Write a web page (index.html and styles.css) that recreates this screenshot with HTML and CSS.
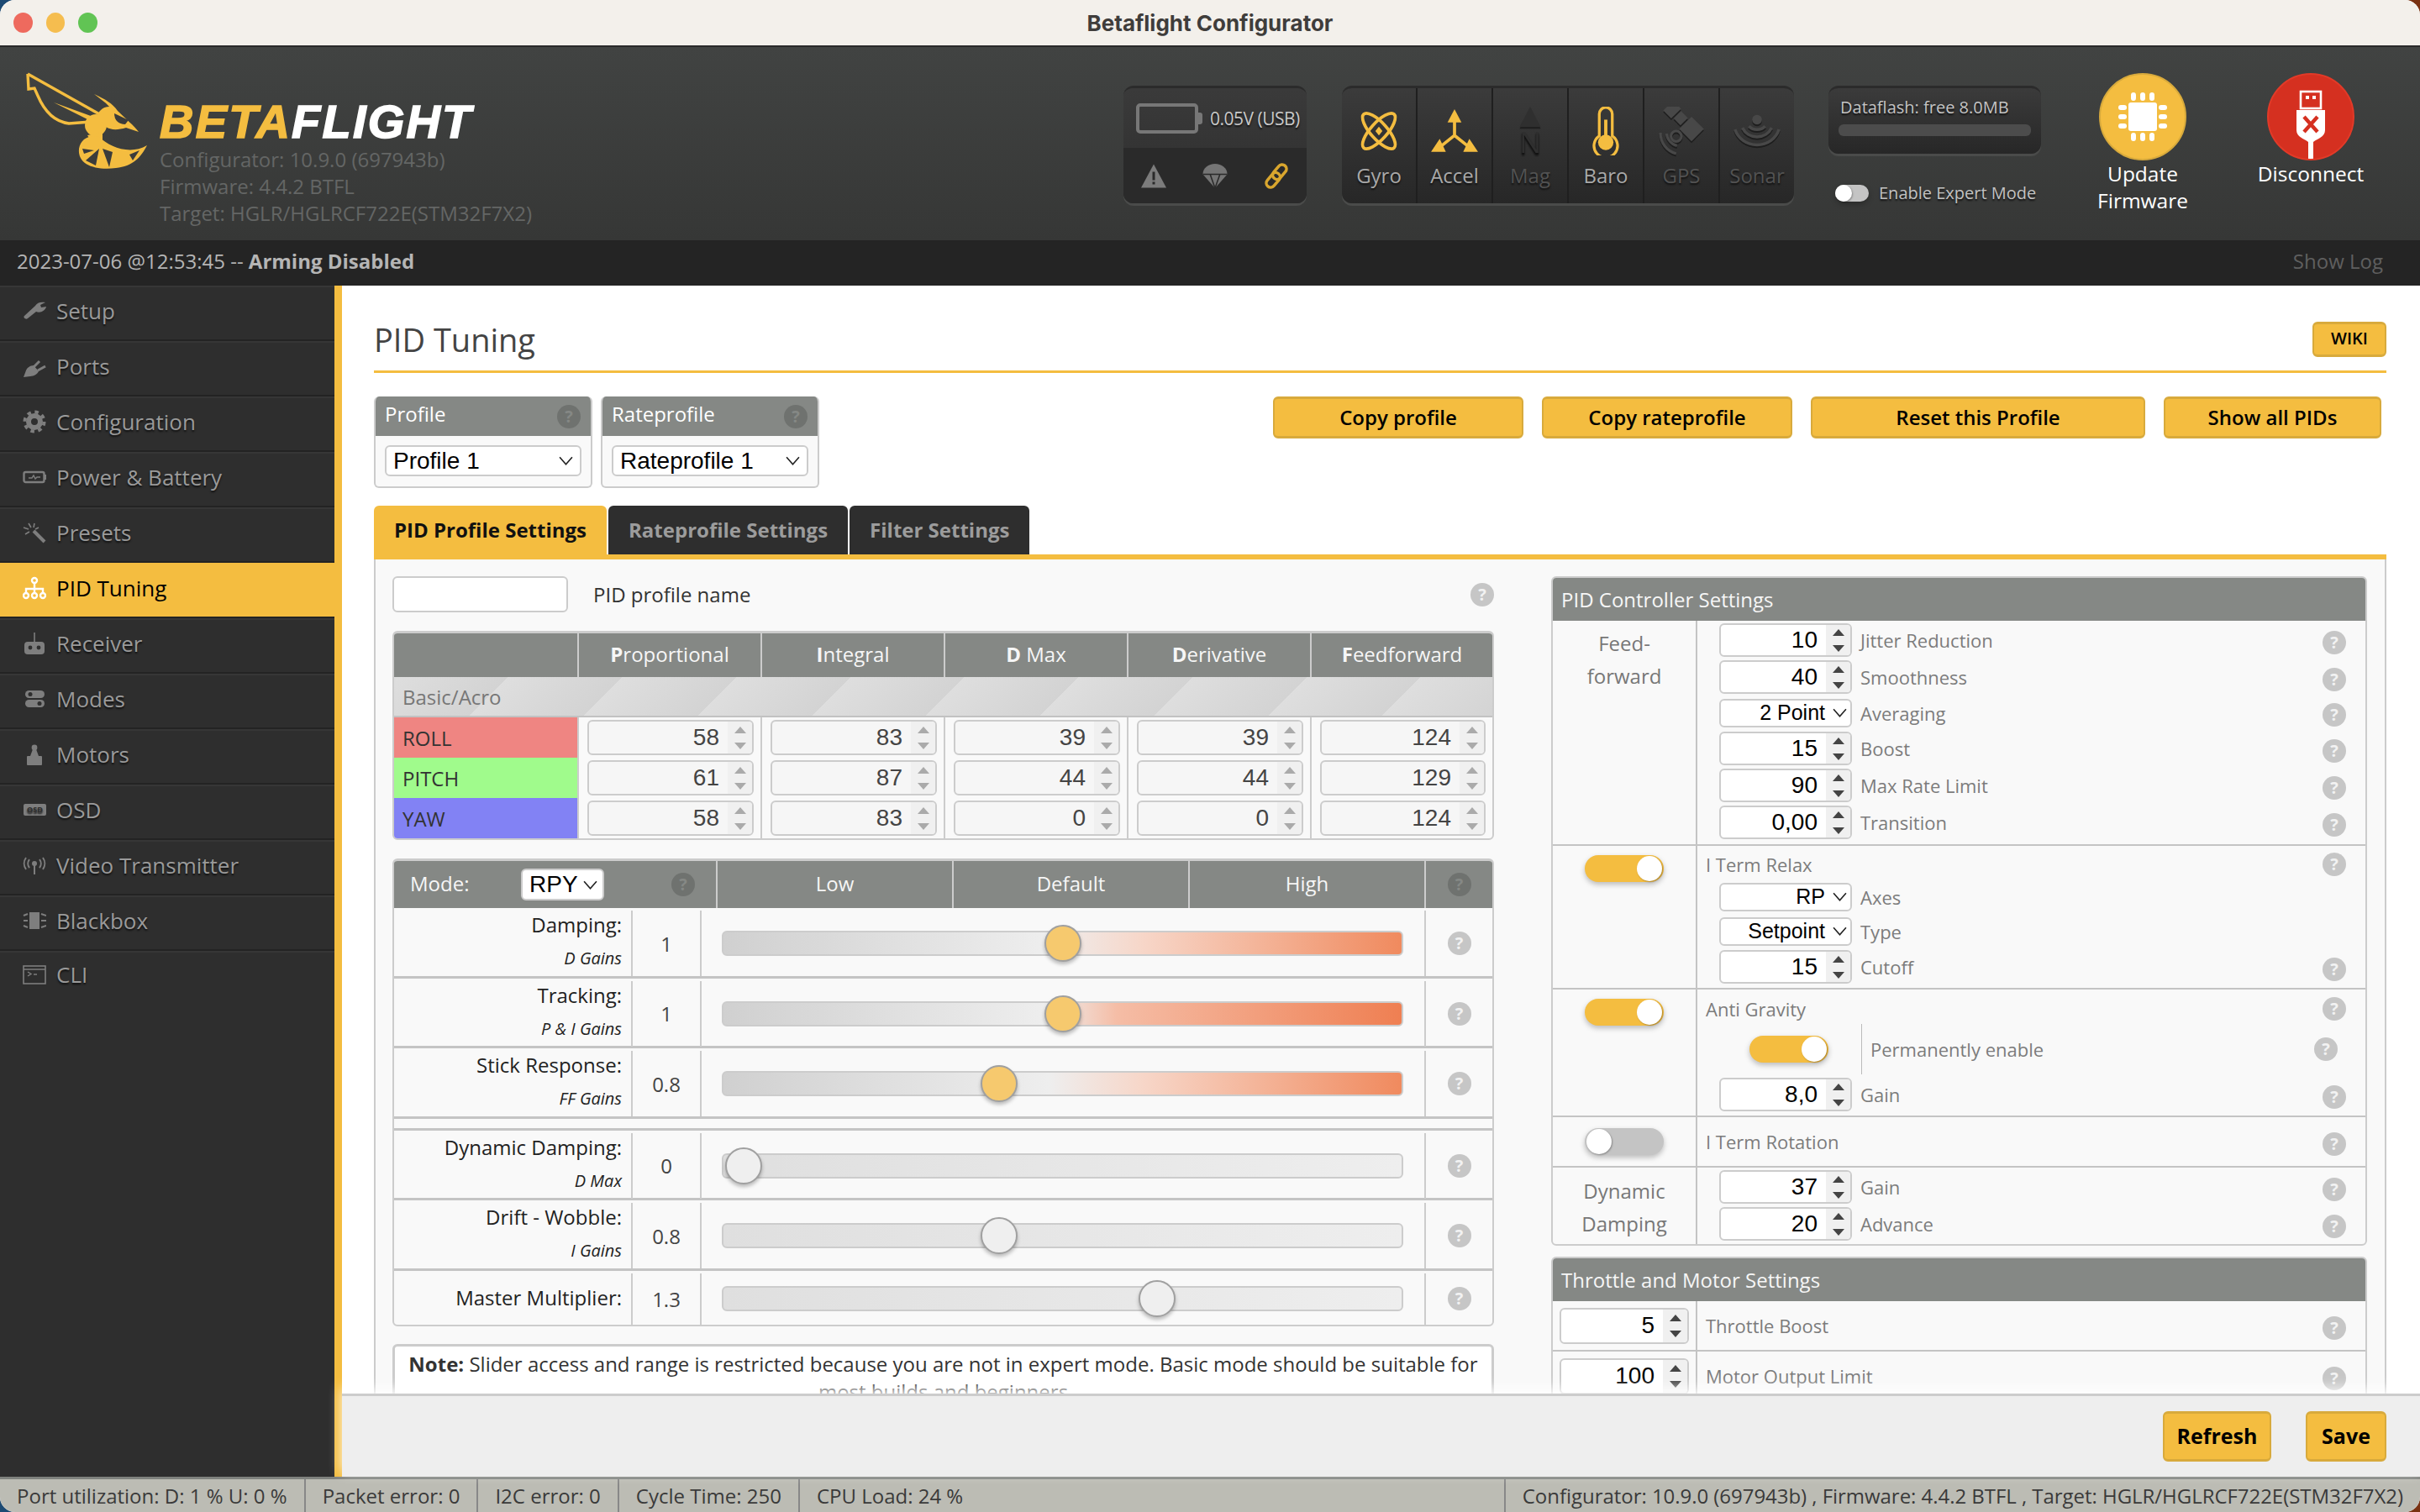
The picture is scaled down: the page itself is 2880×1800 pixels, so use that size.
FILE: index.html
```html
<!DOCTYPE html>
<html lang="en">

<head>
    <meta charset="UTF-8">
    <title>Betaflight Configurator</title>
    <link rel="stylesheet" href="styles.css">
</head>

<body>
    <div class="window">
        <div class="titlebar">
            <div class="lights"><span class="light red"></span><span class="light yellow"></span><span class="light green"></span></div>
            <div class="titlebar-text">Betaflight Configurator</div>
        </div>

        <header class="header">
            <svg class="wasp" viewBox="0 0 148 118">
                <g fill="none" stroke="#f4bd40" stroke-width="3.4">
                    <path d="M3 3 L92 53" />
                    <path d="M3 3 L4 21 L11 20 L15 29 C24 50 36 60 52 62 L78 60" />
                </g>
                <g fill="#f4bd40">
                    <path d="M34 37 L78 53 L78 59 Z" />
                    <ellipse cx="84" cy="64" rx="13" ry="13" />
                    <path d="M82 27 C95 33 104 38 110 47 C118 55 130 65 135 72 L120 67 C110 70 102 70 96 66 L86 55 C86 48 92 42 100 42 C95 36 88 32 82 27 Z" />
                    <path d="M74 76 L92 72 L92 82 L80 86 Z" />
                    <path d="M64 92 C66 80 76 75 88 78 C100 90 125 100 145 88 C138 102 128 113 108 115 C85 118 62 112 64 92 Z" />
                </g>
                <g fill="#3b3c3b">
                    <path d="M106 50 L123 58 L119 63 C111 63 106 58 106 50 Z" />
                    <path d="M68 92 L82 94 L70 98 Z" />
                    <path d="M72 106 L88 92 L84 112 Z" />
                    <path d="M92 92 L100 114 L104 96 Z" />
                    <path d="M124 99 L136 94 L128 106 Z" />
                </g>
            </svg>
            <div class="brand">
                <div class="wordmark"><span class="beta">BETA</span>FLIGHT</div>
                <div class="version">Configurator: 10.9.0 (697943b)</div>
                <div class="version">Firmware: 4.4.2 BTFL</div>
                <div class="version">Target: HGLR/HGLRCF722E(STM32F7X2)</div>
            </div>

            <div class="battery-box">
                <div class="battery-top">
                    <span class="battery"></span>
                    <span class="battery-text">0.05V (USB)</span>
                </div>
                <div class="battery-bottom">
                    <svg class="status-icon" viewBox="0 0 32 30">
                        <path fill="#7c7c7c" d="M16 1 L31 29 L1 29 Z" />
                        <rect x="14.5" y="10" width="3" height="10" fill="#2a2a2a" />
                        <rect x="14.5" y="22" width="3" height="3" fill="#2a2a2a" />
                    </svg>
                    <svg class="status-icon" viewBox="0 0 32 32">
                        <path fill="#757575" d="M16 1 C8 1 1 6 1 14 L16 31 L31 14 C31 6 24 1 16 1 Z" />
                        <path fill="none" stroke="#2a2a2a" stroke-width="1.6" d="M1 14 L31 14 M10 14 L16 31 L22 14" />
                    </svg>
                    <svg class="status-icon" viewBox="0 0 30 30">
                        <g fill="none" stroke="#d9a62e" stroke-width="3.4">
                            <rect x="14" y="1" width="10" height="19" rx="5" transform="rotate(40 19 10)" />
                            <rect x="6" y="10" width="10" height="19" rx="5" transform="rotate(40 11 20)" />
                        </g>
                    </svg>
                </div>
            </div>

            <div class="sensors">
                <div class="sensor on">
                    <svg class="sensor-icon" viewBox="0 0 56 56">
                        <g fill="none" stroke="#f4bd40" stroke-width="3.6">
                            <ellipse cx="28" cy="28" rx="9.5" ry="26" transform="rotate(-42 28 28)" />
                            <ellipse cx="28" cy="28" rx="9.5" ry="26" transform="rotate(42 28 28)" />
                        </g>
                        <path fill="#f4bd40" d="M28 23 L32 28 L28 33 L24 28 Z" />
                    </svg>
                    <span>Gyro</span>
                </div>
                <div class="sensor on">
                    <svg class="sensor-icon" viewBox="0 0 56 56">
                        <g fill="#f4bd40">
                            <path d="M28 3 L36 18 L20 18 Z" />
                            <path d="M1 52 L18 52 L11 37 Z" />
                            <path d="M55 52 L38 52 L45 37 Z" />
                        </g>
                        <path fill="none" stroke="#f4bd40" stroke-width="3.6" d="M28 16 L28 33 L13 45 M28 33 L43 45" />
                    </svg>
                    <span>Accel</span>
                </div>
                <div class="sensor off">
                    <svg class="sensor-icon" viewBox="0 0 56 60">
                        <path fill="#2f2f2f" d="M28 0 L41 25 L15 25 Z" />
                        <text class="mag-n" x="28" y="57">N</text>
                    </svg>
                    <span>Mag</span>
                </div>
                <div class="sensor on">
                    <svg class="sensor-icon" viewBox="0 0 56 60">
                        <path fill="none" stroke="#f4bd40" stroke-width="3.4" d="M20 36 L20 9 A8 8 0 0 1 36 9 L36 36 A14.5 14.5 0 1 1 20 36 Z" />
                        <circle cx="28" cy="44" r="9.5" fill="#f4bd40" />
                        <rect x="26" y="16" width="4" height="24" fill="#f4bd40" />
                    </svg>
                    <span>Baro</span>
                </div>
                <div class="sensor off">
                    <svg class="sensor-icon" viewBox="0 0 56 56">
                        <g fill="#484848" transform="rotate(-45 34 20)">
                            <rect x="26" y="-10" width="16" height="13" />
                            <rect x="28" y="5" width="12" height="11" />
                            <rect x="24" y="18" width="20" height="20" />
                        </g>
                        <g fill="none" stroke="#484848" stroke-width="3">
                            <path d="M4 30 A24 24 0 0 0 22 54" />
                            <path d="M11 31 A16 16 0 0 0 23 45" />
                            <circle cx="22" cy="34" r="6" />
                        </g>
                    </svg>
                    <span>GPS</span>
                </div>
                <div class="sensor off">
                    <svg class="sensor-icon" viewBox="0 0 60 56">
                        <circle cx="30" cy="14" r="6" fill="#484848" />
                        <g fill="none" stroke="#484848" stroke-width="3.6">
                            <path d="M20 22 A14 14 0 0 0 40 22" />
                            <path d="M12 24 A20 20 0 0 0 48 24" />
                            <path d="M3 26 A28 26 0 0 0 57 26" />
                        </g>
                    </svg>
                    <span>Sonar</span>
                </div>
            </div>

            <div class="flash-col">
                <div class="flash-box">
                    <div class="flash-text">Dataflash: free 8.0MB</div>
                    <div class="flash-bar"></div>
                </div>
                <div class="expert">
                    <span class="switch small"><span class="knob"></span></span>
                    <span>Enable Expert Mode</span>
                </div>
            </div>

            <div class="big-btn update">
                <span class="circle circle-yellow">
                    <svg viewBox="0 0 60 60" width="60" height="60">
                        <rect x="13" y="13" width="34" height="34" rx="3" fill="#fff" />
                        <g fill="#fff">
                            <rect x="16" y="1" width="6" height="10" rx="3" />
                            <rect x="27" y="1" width="6" height="10" rx="3" />
                            <rect x="38" y="1" width="6" height="10" rx="3" />
                            <rect x="16" y="49" width="6" height="10" rx="3" />
                            <rect x="27" y="49" width="6" height="10" rx="3" />
                            <rect x="38" y="49" width="6" height="10" rx="3" />
                            <rect x="1" y="16" width="10" height="6" rx="3" />
                            <rect x="1" y="27" width="10" height="6" rx="3" />
                            <rect x="1" y="38" width="10" height="6" rx="3" />
                            <rect x="49" y="16" width="10" height="6" rx="3" />
                            <rect x="49" y="27" width="10" height="6" rx="3" />
                            <rect x="49" y="38" width="10" height="6" rx="3" />
                        </g>
                    </svg>
                </span>
                <span class="big-btn-text">Update<br>Firmware</span>
            </div>
            <div class="big-btn">
                <span class="circle circle-red">
                    <svg viewBox="0 0 40 104" width="40" height="104">
                        <rect x="8" y="22" width="24" height="20" fill="none" stroke="#fff" stroke-width="2.6" />
                        <rect x="14" y="27" width="4" height="4" fill="#fff" />
                        <rect x="22" y="27" width="4" height="4" fill="#fff" />
                        <path fill="#fff" d="M3 44 L37 44 L37 68 C37 76 28 78 23 82 L23 104 L17 104 L17 82 C12 78 3 76 3 68 Z" />
                        <path stroke="#d53020" stroke-width="4.4" d="M12 52 L28 70 M28 52 L12 70" />
                    </svg>
                </span>
                <span class="big-btn-text">Disconnect</span>
            </div>
        </header>

        <div class="logbar">
            <div class="log-text">2023-07-06 @12:53:45 -- <b>Arming Disabled</b></div>
            <div class="show-log">Show Log</div>
        </div>

        <div class="main">
            <nav class="sidebar">
                <a class="nav-item">
                    <svg viewBox="0 0 28 28"><path d="M15 8c2-4 7-5 12-4l-6 3 1 3 6-1c-1 5-7 8-12 6L6 23c-2 2-6-1-4-3z" /></svg>
                    Setup
                </a>
                <a class="nav-item">
                    <svg viewBox="0 0 28 28"><path d="M1 27l3-8c1-3 5-6 9-6l6 7c-1 3-6 6-10 6z" /><path stroke="currentColor" stroke-width="3" d="M13 15l7-7M18 19l9-5" /></svg>
                    Ports
                </a>
                <a class="nav-item">
                    <svg viewBox="0 0 28 28"><circle cx="14" cy="14" r="7" fill="none" stroke="currentColor" stroke-width="6" /><circle cx="14" cy="14" r="11.5" fill="none" stroke="currentColor" stroke-width="4" stroke-dasharray="4.5 4.53" /></svg>
                    Configuration
                </a>
                <a class="nav-item">
                    <svg viewBox="0 0 28 28"><rect x="1.5" y="8" width="24" height="12" rx="2" fill="none" stroke="currentColor" stroke-width="2.4" /><rect x="26" y="11" width="2" height="6" /><path fill="none" stroke="currentColor" stroke-width="1.4" d="M7 15 L11 15 L13 12 L15 16 L17 14 L21 14" /></svg>
                    Power &amp; Battery
                </a>
                <a class="nav-item">
                    <svg viewBox="0 0 28 28"><path stroke="currentColor" stroke-width="4" d="M13 12 L26 25" /><path stroke="currentColor" stroke-width="1.6" d="M1 8 L7 10 M3 16 L8 13 M7 3 L10 8 M14 3 L13 8 M19 8 L15 10" /></svg>
                    Presets
                </a>
                <a class="nav-item active">
                    <svg viewBox="0 0 28 28"><g fill="none" stroke="currentColor" stroke-width="2.4"><circle cx="14" cy="5" r="3" /><circle cx="4" cy="23" r="3" /><circle cx="14" cy="23" r="3" /><circle cx="24" cy="23" r="3" /><path d="M14 8 L14 20 M4 20 L4 15 L24 15 L24 20" /></g></svg>
                    PID Tuning
                </a>
                <a class="nav-item">
                    <svg viewBox="0 0 28 28"><rect x="2" y="12" width="24" height="15" rx="4" /><path stroke="currentColor" stroke-width="1.6" d="M14 1 L14 12" /><circle cx="9" cy="19" r="2.4" class="nav-hole" /><circle cx="19" cy="19" r="2.4" class="nav-hole" /></svg>
                    Receiver
                </a>
                <a class="nav-item">
                    <svg viewBox="0 0 28 28"><rect x="3" y="4" width="23" height="9" rx="4.5" /><rect x="3" y="15" width="23" height="9" rx="4.5" /><circle cx="9" cy="8.5" r="2.5" class="nav-hole" /><circle cx="20" cy="19.5" r="2.5" class="nav-hole" /></svg>
                    Modes
                </a>
                <a class="nav-item">
                    <svg viewBox="0 0 28 28"><rect x="5" y="16" width="18" height="11" rx="1" /><path d="M9 16 L12 8 L16 8 L19 16 Z" /><circle cx="14" cy="6" r="3.4" /></svg>
                    Motors
                </a>
                <a class="nav-item">
                    <svg viewBox="0 0 28 28"><rect x="1" y="7" width="27" height="14" rx="2" /><text x="14.5" y="17.4" class="osd-text">OSD</text></svg>
                    OSD
                </a>
                <a class="nav-item">
                    <svg viewBox="0 0 28 28"><circle cx="14" cy="12" r="3" /><path stroke="currentColor" stroke-width="2" d="M14 13 L14 25" /><g fill="none" stroke="currentColor" stroke-width="2"><path d="M8 7 A8 8 0 0 0 8 17 M20 7 A8 8 0 0 1 20 17" /><path d="M4 5 A12 12 0 0 0 4 19 M24 5 A12 12 0 0 1 24 19" /></g></svg>
                    Video Transmitter
                </a>
                <a class="nav-item">
                    <svg viewBox="0 0 28 28"><rect x="8" y="4" width="12" height="20" /><path stroke="currentColor" stroke-width="2" d="M1 8 L6 6 M1 14 L6 14 M1 20 L6 22 M22 6 L28 8 M22 14 L28 14 M22 22 L28 20" /></svg>
                    Blackbox
                </a>
                <a class="nav-item">
                    <svg viewBox="0 0 28 28"><rect x="1" y="4" width="26" height="21" fill="none" stroke="currentColor" stroke-width="1.6" /><path stroke="currentColor" stroke-width="1.4" fill="none" d="M1 8 L27 8 M6 11 L10 13.5 L6 16 M13 14 L17 14" /></svg>
                    CLI
                </a>
            </nav>

            <div class="content">
                <div class="scroll">
                    <div class="tab-title">
                        <h1>PID Tuning</h1>
                        <a class="btn btn-wiki">WIKI</a>
                    </div>

                    <div class="top-row">
                        <div class="picker">
                            <div class="picker-head"><span>Profile</span> <span class="help dark">?</span></div>
                            <div class="picker-body">
                                <div class="select">Profile 1
                                    <svg class="chev" viewBox="0 0 16 10"><path d="M1 1 L8 9 L15 1" /></svg>
                                </div>
                            </div>
                        </div>
                        <div class="picker">
                            <div class="picker-head"><span>Rateprofile</span> <span class="help dark">?</span></div>
                            <div class="picker-body">
                                <div class="select">Rateprofile 1
                                    <svg class="chev" viewBox="0 0 16 10"><path d="M1 1 L8 9 L15 1" /></svg>
                                </div>
                            </div>
                        </div>
                        <div class="actions">
                            <a class="btn btn-copy">Copy profile</a>
                            <a class="btn btn-copy">Copy rateprofile</a>
                            <a class="btn btn-reset">Reset this Profile</a>
                            <a class="btn btn-show">Show all PIDs</a>
                        </div>
                    </div>

                    <div class="tabs">
                        <a class="tab active">PID Profile Settings</a>
                        <a class="tab">Rateprofile Settings</a>
                        <a class="tab">Filter Settings</a>
                    </div>

                    <div class="panel">
                        <div class="col-left">
                            <div class="name-row">
                                <input class="name-input" type="text">
                                <span class="name-label">PID profile name</span>
                                <span class="help">?</span>
                            </div>

                            <div class="pid-table">
                                <div class="pid-head"></div>
                                <div class="pid-head line"><span><b>P</b>roportional</span></div>
                                <div class="pid-head line"><span><b>I</b>ntegral</span></div>
                                <div class="pid-head line"><span><b>D</b> Max</span></div>
                                <div class="pid-head line"><span><b>D</b>erivative</span></div>
                                <div class="pid-head line"><span><b>F</b>eedforward</span></div>

                                <div class="pid-sub">Basic/Acro</div>

                                <div class="axis roll">ROLL</div>
                                <div class="pid-cell"><div class="num muted"><input value="58"><span class="spin"><i class="up"></i><i class="down"></i></span></div></div>
                                <div class="pid-cell"><div class="num muted"><input value="83"><span class="spin"><i class="up"></i><i class="down"></i></span></div></div>
                                <div class="pid-cell"><div class="num muted"><input value="39"><span class="spin"><i class="up"></i><i class="down"></i></span></div></div>
                                <div class="pid-cell"><div class="num muted"><input value="39"><span class="spin"><i class="up"></i><i class="down"></i></span></div></div>
                                <div class="pid-cell"><div class="num muted"><input value="124"><span class="spin"><i class="up"></i><i class="down"></i></span></div></div>

                                <div class="axis pitch">PITCH</div>
                                <div class="pid-cell"><div class="num muted"><input value="61"><span class="spin"><i class="up"></i><i class="down"></i></span></div></div>
                                <div class="pid-cell"><div class="num muted"><input value="87"><span class="spin"><i class="up"></i><i class="down"></i></span></div></div>
                                <div class="pid-cell"><div class="num muted"><input value="44"><span class="spin"><i class="up"></i><i class="down"></i></span></div></div>
                                <div class="pid-cell"><div class="num muted"><input value="44"><span class="spin"><i class="up"></i><i class="down"></i></span></div></div>
                                <div class="pid-cell"><div class="num muted"><input value="129"><span class="spin"><i class="up"></i><i class="down"></i></span></div></div>

                                <div class="axis yaw">YAW</div>
                                <div class="pid-cell"><div class="num muted"><input value="58"><span class="spin"><i class="up"></i><i class="down"></i></span></div></div>
                                <div class="pid-cell"><div class="num muted"><input value="83"><span class="spin"><i class="up"></i><i class="down"></i></span></div></div>
                                <div class="pid-cell"><div class="num muted"><input value="0"><span class="spin"><i class="up"></i><i class="down"></i></span></div></div>
                                <div class="pid-cell"><div class="num muted"><input value="0"><span class="spin"><i class="up"></i><i class="down"></i></span></div></div>
                                <div class="pid-cell"><div class="num muted"><input value="124"><span class="spin"><i class="up"></i><i class="down"></i></span></div></div>
                            </div>

                            <div class="mode-table">
                                <div class="mode-head">
                                    <div class="mode-head-left">
                                        <span class="mode-label">Mode:</span>
                                        <div class="select select-rpy">RPY
                                            <svg class="chev" viewBox="0 0 16 10"><path d="M1 1 L8 9 L15 1" /></svg>
                                        </div>
                                        <span class="help dark">?</span>
                                    </div>
                                    <div class="mode-col"><span>Low</span></div>
                                    <div class="mode-col"><span>Default</span></div>
                                    <div class="mode-col"><span>High</span></div>
                                    <div class="mode-col"><span class="help dark">?</span></div>
                                </div>

                                <div class="mode-row">
                                    <div class="mode-name">Damping:<small>D Gains</small></div>
                                    <div class="mode-val">1</div>
                                    <div class="mode-slider"><div class="track live"><span class="thumb live" style="left: 50%"></span></div></div>
                                    <div class="mode-help"><span class="help">?</span></div>
                                </div>
                                <div class="mode-row">
                                    <div class="mode-name">Tracking:<small>P &amp; I Gains</small></div>
                                    <div class="mode-val">1</div>
                                    <div class="mode-slider"><div class="track live strong"><span class="thumb live" style="left: 50%"></span></div></div>
                                    <div class="mode-help"><span class="help">?</span></div>
                                </div>
                                <div class="mode-row">
                                    <div class="mode-name">Stick Response:<small>FF Gains</small></div>
                                    <div class="mode-val">0.8</div>
                                    <div class="mode-slider"><div class="track live"><span class="thumb live" style="left: 40.7%"></span></div></div>
                                    <div class="mode-help"><span class="help">?</span></div>
                                </div>
                                <div class="mode-gap"></div>
                                <div class="mode-row">
                                    <div class="mode-name">Dynamic Damping:<small>D Max</small></div>
                                    <div class="mode-val">0</div>
                                    <div class="mode-slider"><div class="track"><span class="thumb" style="left: 3%"></span></div></div>
                                    <div class="mode-help"><span class="help">?</span></div>
                                </div>
                                <div class="mode-row">
                                    <div class="mode-name">Drift - Wobble:<small>I Gains</small></div>
                                    <div class="mode-val">0.8</div>
                                    <div class="mode-slider"><div class="track"><span class="thumb" style="left: 40.7%"></span></div></div>
                                    <div class="mode-help"><span class="help">?</span></div>
                                </div>
                                <div class="mode-row last">
                                    <div class="mode-name">Master Multiplier:</div>
                                    <div class="mode-val">1.3</div>
                                    <div class="mode-slider"><div class="track"><span class="thumb" style="left: 64%"></span></div></div>
                                    <div class="mode-help"><span class="help">?</span></div>
                                </div>
                            </div>

                            <div class="note"><b>Note:</b> Slider access and range is restricted because you are not in expert mode. Basic mode should be suitable for most builds and beginners</div>
                        </div>

                        <div class="col-right">
                            <div class="box">
                                <div class="box-head">PID Controller Settings</div>

                                <div class="group">
                                    <div class="group-left"><span>Feed-</span><span>forward</span></div>
                                    <div class="group-right pad-ff">
                                        <div class="ctl"><div class="num"><input value="10"><span class="spin"><i class="up"></i><i class="down"></i></span></div><label>Jitter Reduction</label><span class="help">?</span></div>
                                        <div class="ctl"><div class="num"><input value="40"><span class="spin"><i class="up"></i><i class="down"></i></span></div><label>Smoothness</label><span class="help">?</span></div>
                                        <div class="ctl sel"><div class="select select-small">2 Point<svg class="chev" viewBox="0 0 16 10"><path d="M1 1 L8 9 L15 1" /></svg></div><label>Averaging</label><span class="help">?</span></div>
                                        <div class="ctl"><div class="num"><input value="15"><span class="spin"><i class="up"></i><i class="down"></i></span></div><label>Boost</label><span class="help">?</span></div>
                                        <div class="ctl"><div class="num"><input value="90"><span class="spin"><i class="up"></i><i class="down"></i></span></div><label>Max Rate Limit</label><span class="help">?</span></div>
                                        <div class="ctl"><div class="num"><input value="0,00"><span class="spin"><i class="up"></i><i class="down"></i></span></div><label>Transition</label><span class="help">?</span></div>
                                    </div>
                                </div>

                                <div class="group">
                                    <div class="group-left switch-top"><span class="switch on"><span class="knob"></span></span></div>
                                    <div class="group-right pad-relax">
                                        <div class="ctl-title relax-title"><label>I Term Relax</label><span class="help">?</span></div>
                                        <div class="ctl sel"><div class="select select-small">RP<svg class="chev" viewBox="0 0 16 10"><path d="M1 1 L8 9 L15 1" /></svg></div><label>Axes</label></div>
                                        <div class="ctl sel"><div class="select select-small">Setpoint<svg class="chev" viewBox="0 0 16 10"><path d="M1 1 L8 9 L15 1" /></svg></div><label>Type</label></div>
                                        <div class="ctl"><div class="num"><input value="15"><span class="spin"><i class="up"></i><i class="down"></i></span></div><label>Cutoff</label><span class="help">?</span></div>
                                    </div>
                                </div>

                                <div class="group">
                                    <div class="group-left switch-top"><span class="switch on"><span class="knob"></span></span></div>
                                    <div class="group-right pad-relax">
                                        <div class="ctl-title gravity-title"><label>Anti Gravity</label><span class="help">?</span></div>
                                        <div class="perm">
                                            <div class="perm-switch"><span class="switch on"><span class="knob"></span></span></div>
                                            <label>Permanently enable</label>
                                            <span class="help">?</span>
                                        </div>
                                        <div class="ctl"><div class="num"><input value="8,0"><span class="spin"><i class="up"></i><i class="down"></i></span></div><label>Gain</label><span class="help">?</span></div>
                                    </div>
                                </div>

                                <div class="group">
                                    <div class="group-left switch-mid"><span class="switch"><span class="knob"></span></span></div>
                                    <div class="group-right"><div class="ctl-title rotation-title"><label>I Term Rotation</label><span class="help">?</span></div></div>
                                </div>

                                <div class="group last">
                                    <div class="group-left dyn-left"><span>Dynamic</span><span>Damping</span></div>
                                    <div class="group-right pad-dyn">
                                        <div class="ctl"><div class="num"><input value="37"><span class="spin"><i class="up"></i><i class="down"></i></span></div><label>Gain</label><span class="help">?</span></div>
                                        <div class="ctl"><div class="num"><input value="20"><span class="spin"><i class="up"></i><i class="down"></i></span></div><label>Advance</label><span class="help">?</span></div>
                                    </div>
                                </div>
                            </div>

                            <div class="box box-throttle">
                                <div class="box-head">Throttle and Motor Settings</div>
                                <div class="group simple">
                                    <div class="group-left"><div class="num num-wide"><input value="5"><span class="spin"><i class="up"></i><i class="down"></i></span></div></div>
                                    <div class="group-right"><div class="ctl-title"><label>Throttle Boost</label><span class="help">?</span></div></div>
                                </div>
                                <div class="group simple">
                                    <div class="group-left"><div class="num num-wide"><input value="100"><span class="spin"><i class="up"></i><i class="down"></i></span></div></div>
                                    <div class="group-right"><div class="ctl-title"><label>Motor Output Limit</label><span class="help">?</span></div></div>
                                </div>
                            </div>
                        </div>
                    </div>
                </div>

                <div class="footer">
                    <a class="btn btn-foot">Refresh</a>
                    <a class="btn btn-foot">Save</a>
                </div>
            </div>
        </div>

        <footer class="statusbar">
            <div class="stat">Port utilization: D: 1 % U: 0 %</div>
            <div class="stat">Packet error: 0</div>
            <div class="stat">I2C error: 0</div>
            <div class="stat">Cycle Time: 250</div>
            <div class="stat no-line">CPU Load: 24 %</div>
            <div class="stat info">Configurator: 10.9.0 (697943b) , Firmware: 4.4.2 BTFL , Target: HGLR/HGLRCF722E(STM32F7X2)</div>
        </footer>
    </div>
</body>

</html>
```

FILE: styles.css
```css
* {
    box-sizing: border-box;
}

html,
body {
    margin: 0;
    height: 100%;
    overflow: hidden;
}

body {
    background: linear-gradient(to right, #1d4a73 50%, #7a3212 50%);
    font-family: "Open Sans", sans-serif;
    font-size: 24px;
}

.window {
    display: flex;
    flex-direction: column;
    height: 1800px;
    border-radius: 18px;
    overflow: hidden;
    background: #fff;
}

/* title bar */
.titlebar {
    display: flex;
    align-items: center;
    flex: 0 0 56px;
    background: #f3f0eb;
    border-bottom: 2px solid #2a2a2a;
    padding-left: 16px;
}

.lights {
    display: flex;
    gap: 16px;
    width: 100px;
}

.light {
    width: 24px;
    height: 24px;
    border-radius: 50%;
}

.light.red {
    background: #ee6a5e;
}

.light.yellow {
    background: #f5bd4f;
}

.light.green {
    background: #61c454;
}

.titlebar-text {
    flex: 1;
    margin-right: 116px;
    text-align: center;
    font-family: Inter, sans-serif;
    font-size: 26px;
    font-weight: 700;
    color: #3f3d3b;
}

/* header */
.header {
    display: flex;
    align-items: flex-start;
    flex: 0 0 230px;
    padding-right: 30px;
    background: linear-gradient(#414342, #363736);
}

.wasp {
    width: 148px;
    height: 118px;
    margin: 29px 0 0 30px;
}

.brand {
    margin: 58px auto 0 12px;
}

.wordmark {
    height: 60px;
    font-family: "Liberation Sans", sans-serif;
    font-size: 56px;
    font-weight: 700;
    font-style: italic;
    line-height: 62px;
    letter-spacing: 2.2px;
    color: #fff;
    -webkit-text-stroke: 1.6px currentColor;
}

.beta {
    color: #f4bd40;
}

.version {
    line-height: 32px;
    color: #646665;
}

.battery-box,
.sensors,
.flash-box {
    background: linear-gradient(#3b3b3b, #272727);
    border-radius: 12px;
    border-top: 3px solid #2b2b2b;
    box-shadow: 0 3px 0 #4a4b4a;
}

.battery-box {
    width: 218px;
    height: 140px;
    margin-top: 46px;
    overflow: hidden;
}

.battery-top {
    display: flex;
    align-items: center;
    height: 71px;
    padding-left: 15px;
    background: linear-gradient(#3a3a3a, #343434);
}

.battery {
    position: relative;
    width: 74px;
    height: 36px;
    margin-right: 14px;
    border: 4px solid #777;
    border-radius: 5px;
}

.battery::after {
    content: "";
    position: absolute;
    right: -9px;
    top: 7px;
    width: 5px;
    height: 14px;
    background: #777;
    border-radius: 0 3px 3px 0;
}

.battery-text {
    font-size: 21px;
    color: #c9c9c9;
    white-space: nowrap;
    letter-spacing: -0.5px;
    text-shadow: 0 2px 2px #111;
}

.battery-bottom {
    display: flex;
    justify-content: space-between;
    align-items: center;
    height: 66px;
    padding: 0 20px;
    background: #2a2a2a;
}

.status-icon {
    width: 32px;
    height: 31px;
}

.sensors {
    display: flex;
    width: 538px;
    height: 140px;
    margin: 46px 0 0 42px;
    overflow: hidden;
}

.sensor {
    display: flex;
    flex-direction: column;
    align-items: center;
    flex: 1;
    padding-top: 22px;
    border-right: 2px solid #1f1f1f;
    font-size: 24px;
    line-height: 34px;
    text-shadow: 0 2px 2px #111;
}

.sensor:last-child {
    border-right: 0;
}

.sensor.on {
    color: #a9a9a9;
}

.sensor.off {
    color: #525252;
}

.sensor-icon {
    width: 58px;
    height: 58px;
    margin-bottom: 7px;
}

.sensor.off .sensor-icon {
    filter: drop-shadow(0 2px 0 #1d1d1d);
}

.mag-n {
    font-size: 36px;
    font-family: "Open Sans", sans-serif;
    text-anchor: middle;
    fill: #2f2f2f;
}

.flash-col {
    flex: none;
    width: 253px;
    margin: 46px 0 0 41px;
}

.flash-box {
    height: 81px;
    padding: 8px 12px;
}

.flash-text {
    font-size: 20px;
    line-height: 30px;
    padding-left: 2px;
    color: #c4c4c4;
    text-shadow: 0 2px 2px #111;
}

.flash-bar {
    height: 14px;
    margin-top: 5px;
    background: #4c4c4c;
    border-radius: 6px;
}

.expert {
    display: flex;
    align-items: center;
    gap: 12px;
    margin: 33px 0 0 8px;
    font-size: 20px;
    white-space: nowrap;
    color: #c2c2c2;
    text-shadow: 0 2px 2px #111;
}

.big-btn {
    display: flex;
    flex-direction: column;
    align-items: center;
    width: 200px;
    margin-top: 31px;
}

.big-btn.update {
    margin-left: 21px;
}

.circle {
    display: flex;
    align-items: center;
    justify-content: center;
    width: 104px;
    height: 104px;
    border-radius: 50%;
    overflow: hidden;
}

.circle-yellow {
    background: #f4bd40;
    border: 2px solid #d8aa3c;
}

.circle-red {
    background: #d53020;
    border: 2px solid #e23a28;
}

.big-btn-text {
    width: 100%;
    text-align: center;
    font-size: 24.5px;
    line-height: 32px;
    color: #fff;
}

/* log bar */
.logbar {
    display: flex;
    justify-content: space-between;
    align-items: center;
    flex: 0 0 54px;
    padding: 0 44px 5px 20px;
    background: #242424;
}

.log-text {
    color: #b5b5b5;
}

.show-log {
    color: #5f5f5f;
}

/* layout below header */
.main {
    display: flex;
    flex: 1;
    min-height: 0;
}

.sidebar {
    flex: 0 0 407px;
    background: #2e2e2e;
    border-right: 9px solid #f4bd40;
}

.nav-item {
    display: flex;
    align-items: center;
    gap: 12px;
    height: 66px;
    padding: 0 0 4px 27px;
    border-bottom: 2px solid #232323;
    box-shadow: inset 0 2px 0 #363636;
    font-size: 26px;
    color: #9a9a9a;
    text-shadow: 0 2px 2px #111;
}

.nav-item svg {
    width: 28px;
    height: 28px;
    fill: #7e7e7e;
    color: #7e7e7e;
}

.nav-item:last-child {
    padding-bottom: 11px;
    border-bottom: 0;
}

.nav-item.active {
    background: #f4bd40;
    color: #000;
    text-shadow: none;
    box-shadow: none;
}

.nav-item.active svg {
    color: #fff;
    fill: #fff;
}

.nav-hole {
    fill: #2e2e2e;
}

.osd-text {
    font-family: "Open Sans", sans-serif;
    font-size: 9px;
    font-weight: 700;
    text-anchor: middle;
    fill: #2e2e2e;
}

.content {
    display: flex;
    flex-direction: column;
    flex: 1;
    min-width: 0;
}

.scroll {
    flex: 1;
    min-height: 0;
    overflow: hidden;
    padding: 26px 41px 0 38px;
    background: #fff;
}

.tab-title {
    display: flex;
    justify-content: space-between;
    align-items: center;
    height: 78px;
    border-bottom: 3px solid #f4bd40;
    margin-right: -1px;
}

h1 {
    margin: 0;
    font-size: 38px;
    font-weight: 400;
    color: #444;
}

.btn {
    display: flex;
    align-items: center;
    justify-content: center;
    padding-bottom: 2px;
    background: #f4bd40;
    border: 2px solid #d8aa3c;
    border-top-width: 3px;
    border-bottom-width: 3px;
    border-radius: 6px;
    font-weight: 600;
    color: #000;
}

.btn-wiki {
    width: 88px;
    height: 42px;
    font-size: 20px;
}

.top-row {
    display: flex;
    align-items: flex-start;
    margin-top: 28px;
}

.picker {
    width: 260px;
    height: 109px;
    margin-right: 10px;
    border: 2px solid #ccc;
    border-top: 0;
    border-radius: 6px;
    background: #f9f9f9;
    overflow: hidden;
}

.picker-head {
    display: flex;
    justify-content: space-between;
    align-items: center;
    height: 47px;
    padding: 0 12px 0 11px;
    background: #858885;
    color: #fff;
}

.picker-head span:first-child {
    margin-bottom: 6px;
}

.picker-body {
    padding: 11px 11px 0;
}

.select {
    display: flex;
    justify-content: space-between;
    align-items: center;
    height: 37px;
    padding: 0 8px;
    background: #fff;
    border: 2px solid #ccc;
    border-radius: 6px;
    font-family: "Liberation Sans", sans-serif;
    font-size: 28px;
    color: #000;
}

.chev {
    flex: none;
    width: 17px;
    height: 11px;
}

.chev path {
    fill: none;
    stroke: #222;
    stroke-width: 1.5;
}

.actions {
    display: flex;
    gap: 22px;
    margin-left: auto;
    margin-right: 5px;
}

.btn-copy {
    width: 298px;
    height: 50px;
}

.btn-reset {
    width: 398px;
    height: 50px;
}

.btn-show {
    width: 259px;
    height: 50px;
}

.tabs {
    display: flex;
    gap: 2px;
    height: 64px;
    margin-top: 21px;
    margin-right: -1px;
    border-bottom: 6px solid #f4bd40;
}

.tab {
    display: flex;
    align-items: center;
    height: 58px;
    padding: 0 24px 2px;
    background: #2e2e2e;
    border-radius: 6px 6px 0 0;
    font-weight: 700;
    color: #9c9c9c;
}

.tab.active {
    background: #f4bd40;
    color: #111;
}

.panel {
    display: flex;
    gap: 68px;
    padding: 20px 20px 0;
    margin-right: -1px;
    background: #f9f9f9;
    border-left: 2px solid #ccc;
    border-right: 2px solid #ccc;
    min-height: 1000px;
}

.col-left {
    flex: 0 0 1311px;
    min-width: 0;
}

.col-right {
    flex: 0 0 971px;
    min-width: 0;
}

.help {
    display: inline-flex;
    align-items: center;
    justify-content: center;
    flex: none;
    width: 28px;
    height: 28px;
    border-radius: 50%;
    background: #c6c6c6;
    font-size: 20px;
    font-weight: 700;
    line-height: 1;
    color: #f2f2f2;
}

.help.dark {
    background: #6f726f;
    color: #858885;
}

.name-row {
    display: flex;
    align-items: center;
    height: 43px;
}

.name-input {
    width: 209px;
    height: 43px;
    background: #fff;
    border: 2px solid #ccc;
    border-radius: 6px;
}

.name-label {
    margin-left: 30px;
    color: #333;
}

.name-row .help {
    margin-left: auto;
    margin-right: 0;
}

/* pid table */
.pid-table {
    display: grid;
    grid-template-columns: 218px 218px 218px 218px 218px minmax(0, 1fr);
    grid-template-rows: 52px 48px 48px 48px 48px;
    height: 249px;
    margin-top: 22px;
    background: #f9f9f9;
    border: 2px solid #ccc;
    border-top-width: 3px;
    border-radius: 6px;
    overflow: hidden;
}

.pid-head {
    display: flex;
    align-items: center;
    justify-content: center;
    padding-bottom: 3px;
    background: #858885;
    color: #f6f6f6;
}

.pid-head.line {
    border-left: 2px solid #ccc;
}

.pid-head b {
    font-weight: 700;
}

.pid-sub {
    grid-column: 1 / -1;
    display: flex;
    align-items: center;
    padding-left: 10px;
    background: repeating-linear-gradient(135deg, #dedede 0, #d3d3d3 96px);
    border-bottom: 2px solid #c2c2c2;
    color: #777;
}

.axis {
    display: flex;
    align-items: center;
    padding-left: 10px;
    color: #333;
}

.axis.roll {
    background: #ef8582;
}

.axis.pitch {
    background: #a0fb8c;
}

.axis.yaw {
    background: #8282f4;
}

.pid-cell {
    display: flex;
    align-items: center;
    padding: 0 8px 0 10px;
    border-left: 2px solid #ccc;
}

.num {
    display: flex;
    flex: none;
    width: 158px;
    height: 40px;
    background: #fff;
    border: 2px solid #ccc;
    border-radius: 6px;
    overflow: hidden;
}

.num input {
    flex: 1;
    width: 0;
    min-width: 0;
    padding: 0 10px 0 0;
    border: 0;
    background: transparent;
    text-align: right;
    font-family: "Liberation Sans", sans-serif;
    font-size: 28px;
    color: #000;
}

.spin {
    display: flex;
    flex-direction: column;
    align-items: center;
    justify-content: center;
    gap: 11px;
    flex: 0 0 29px;
    background: #f0f0f0;
}

.spin i {
    width: 0;
    height: 0;
    border-left: 7px solid transparent;
    border-right: 7px solid transparent;
}

.spin .up {
    border-bottom: 8px solid #444;
}

.spin .down {
    border-top: 8px solid #444;
}

.num.muted {
    width: 100%;
    height: 42px;
    background: #f6f6f6;
}

.num.muted input {
    color: #444;
}

.num.muted .spin .up {
    border-bottom-color: #aaa;
}

.num.muted .spin .down {
    border-top-color: #aaa;
}

/* sliders table */
.mode-table {
    margin-top: 22px;
    height: 557px;
    border: 2px solid #ccc;
    border-top-width: 3px;
    border-radius: 6px;
    overflow: hidden;
}

.mode-head {
    display: grid;
    grid-template-columns: 383px 281px 281px 281px 1fr;
    height: 56px;
    background: #858885;
    color: #f6f6f6;
}

.mode-head-left {
    display: flex;
    align-items: center;
    padding-left: 19px;
}

.mode-label {
    width: 132px;
    margin-bottom: 3px;
}

.select-rpy {
    width: 99px;
    height: 38px;
    padding: 0 6px 0 8px;
}

.mode-head-left .help {
    margin-left: 80px;
}

.mode-col {
    display: flex;
    align-items: center;
    justify-content: center;
    border-left: 2px solid #ccc;
}

.mode-col span:not(.help) {
    margin-bottom: 3px;
}

.mode-row {
    display: grid;
    grid-template-columns: 282px 84px 860px 1fr;
    height: 83.5px;
    border-top: 3px solid transparent;
    border-bottom: 3px solid #c4c4c4;
}

.mode-row.last {
    height: 64px;
    border-bottom: 0;
}

.mode-gap {
    height: 14px;
    border-bottom: 3px solid #c4c4c4;
}

.mode-name {
    display: flex;
    flex-direction: column;
    justify-content: center;
    align-items: flex-end;
    padding: 0 11px 11px 0;
    color: #222;
}

.mode-row.last .mode-name {
    padding-bottom: 4px;
}

.mode-name small {
    margin-top: 14px;
    font-size: 20px;
    line-height: 1;
    font-style: italic;
}

.mode-val {
    display: flex;
    align-items: center;
    justify-content: center;
    border-left: 2px solid #ccc;
    border-right: 2px solid #ccc;
    color: #444;
}

.mode-slider {
    display: flex;
    align-items: center;
    padding: 0 25px 0 24px;
}

.track {
    position: relative;
    width: 100%;
    height: 30px;
    border: 2px solid #ccc;
    border-radius: 6px;
    background: linear-gradient(to right, #dfdfdf, #eee);
}

.track.live {
    background: linear-gradient(to right, #d0d0d0 0, #eee 48%, #f7d6c8 62%, #f08a5e 100%);
}

.track.live.strong {
    background: linear-gradient(to right, #d0d0d0 0, #eee 48%, #f5bda6 58%, #ef7f52 100%);
}

.thumb {
    position: absolute;
    top: 50%;
    width: 44px;
    height: 44px;
    transform: translate(-50%, -50%);
    border-radius: 50%;
    background: #efefef;
    border: 2px solid #a0a0a0;
    box-shadow: 0 3px 4px rgba(0, 0, 0, 0.25);
}

.thumb.live {
    background: #f6c96e;
}

.mode-help {
    display: flex;
    align-items: center;
    justify-content: center;
    border-left: 2px solid #ccc;
}

.note {
    margin-top: 21px;
    padding: 4px 12px 0;
    background: #fff;
    border: 3px solid #ccc;
    border-radius: 6px;
    text-align: center;
    font-size: 24px;
    line-height: 33px;
    color: #333;
}

/* right column */
.box {
    background: #f9f9f9;
    border: 2px solid #ccc;
    border-radius: 6px;
    overflow: hidden;
}

.box-throttle {
    margin-top: 13px;
}

.box-head {
    display: flex;
    align-items: center;
    height: 51px;
    padding-left: 10px;
    background: #858885;
    color: #f6f6f6;
}

.group {
    display: flex;
    border-bottom: 2px solid #c4c4c4;
}

.group.last {
    border-bottom: 0;
}

.group-left {
    display: flex;
    flex-direction: column;
    align-items: center;
    flex: 0 0 170px;
    padding-top: 7px;
    line-height: 39px;
    color: #777;
}

.switch-top {
    padding-top: 11px;
}

.switch-mid {
    justify-content: center;
    padding-top: 0;
}

.dyn-left {
    justify-content: center;
    padding-top: 2px;
}

.group-right {
    flex: 1;
    min-width: 0;
    border-left: 2px solid #c4c4c4;
}

.pad-ff {
    padding: 1px 0 4px;
}

.pad-relax {
    padding: 0 0 3px;
}

.pad-dyn {
    padding: 1px 0 2px;
}

.ctl {
    display: flex;
    align-items: center;
    height: 44px;
    padding: 0 23px 0 26px;
    color: #7c7c7c;
}

.ctl.sel {
    height: 41px;
}

.ctl label {
    margin-left: 10px;
    font-size: 22px;
}

.ctl .help,
.ctl-title .help {
    margin-left: auto;
}

.ctl .help,
.rotation-title .help,
.group.simple .help {
    margin-top: 5px;
}

.select-small {
    width: 158px;
    height: 34px;
    justify-content: flex-end;
    gap: 9px;
    font-size: 25px;
    padding: 0 4px;
}

.ctl-title {
    display: flex;
    align-items: center;
    height: 58px;
    padding: 0 23px 0 10px;
    color: #7c7c7c;
    font-size: 22px;
}

.relax-title {
    height: 40px;
    padding-top: 4px;
}

.gravity-title {
    height: 41px;
    padding-top: 5px;
}

.perm {
    display: flex;
    align-items: center;
    height: 60px;
    padding-right: 33px;
    color: #7c7c7c;
    font-size: 22px;
}

.perm-switch {
    display: flex;
    justify-content: flex-end;
    align-items: center;
    width: 196px;
    height: 60px;
    padding-right: 39px;
    border-right: 1px solid #bbb;
}

.perm label {
    margin-left: 10px;
}

.perm .help {
    margin-left: auto;
}

.gravity-title + .perm + .ctl {
    margin-top: 2px;
}

.switch {
    display: inline-flex;
    align-items: center;
    padding: 0 2px;
    width: 94px;
    height: 32px;
    border-radius: 16px;
    background: #c4c4c4;
    box-shadow: 0 3px 6px rgba(0, 0, 0, 0.25);
}

.switch.on {
    justify-content: flex-end;
    background: #f4bd40;
}

.knob {
    width: 30px;
    height: 30px;
    border-radius: 50%;
    background: #fff;
    box-shadow: 1px 1px 2px rgba(0, 0, 0, 0.3);
}

.switch.small {
    flex: none;
    width: 40px;
    height: 20px;
    padding: 0;
    background: #c4c4c4;
}

.switch.small .knob {
    width: 20px;
    height: 20px;
}

.group.simple {
    height: 60px;
}

.group.simple .group-left {
    justify-content: center;
    padding: 0;
}

.num-wide {
    width: 154px;
    height: 43px;
}

/* footer of the tab */
.footer {
    position: relative;
    display: flex;
    justify-content: flex-end;
    align-items: center;
    gap: 41px;
    flex: 0 0 99px;
    padding: 0 40px 0 0;
    background: #eee;
    border-top: 3px solid #ccc;
    box-shadow: 0 -6px 14px rgba(255, 255, 255, 0.9);
}

.btn-foot {
    height: 60px;
    font-size: 25px;
    font-weight: 700;
}

.btn-foot:first-child {
    width: 129px;
}

.btn-foot:last-child {
    width: 96px;
}

/* status bar */
.statusbar {
    display: flex;
    align-items: center;
    flex: 0 0 42px;
    background: #bcbcb4;
    border-top: 3px solid #7f827e;
    color: #3a3a3a;
    white-space: nowrap;
}

.stat {
    display: flex;
    align-items: center;
    height: 100%;
    padding: 0 20px;
    border-right: 2px solid #888;
}

.stat.no-line {
    border-right: 0;
}

.stat.info {
    margin-left: auto;
    border-right: 0;
    border-left: 2px solid #888;
    letter-spacing: -0.04px;
}
```
